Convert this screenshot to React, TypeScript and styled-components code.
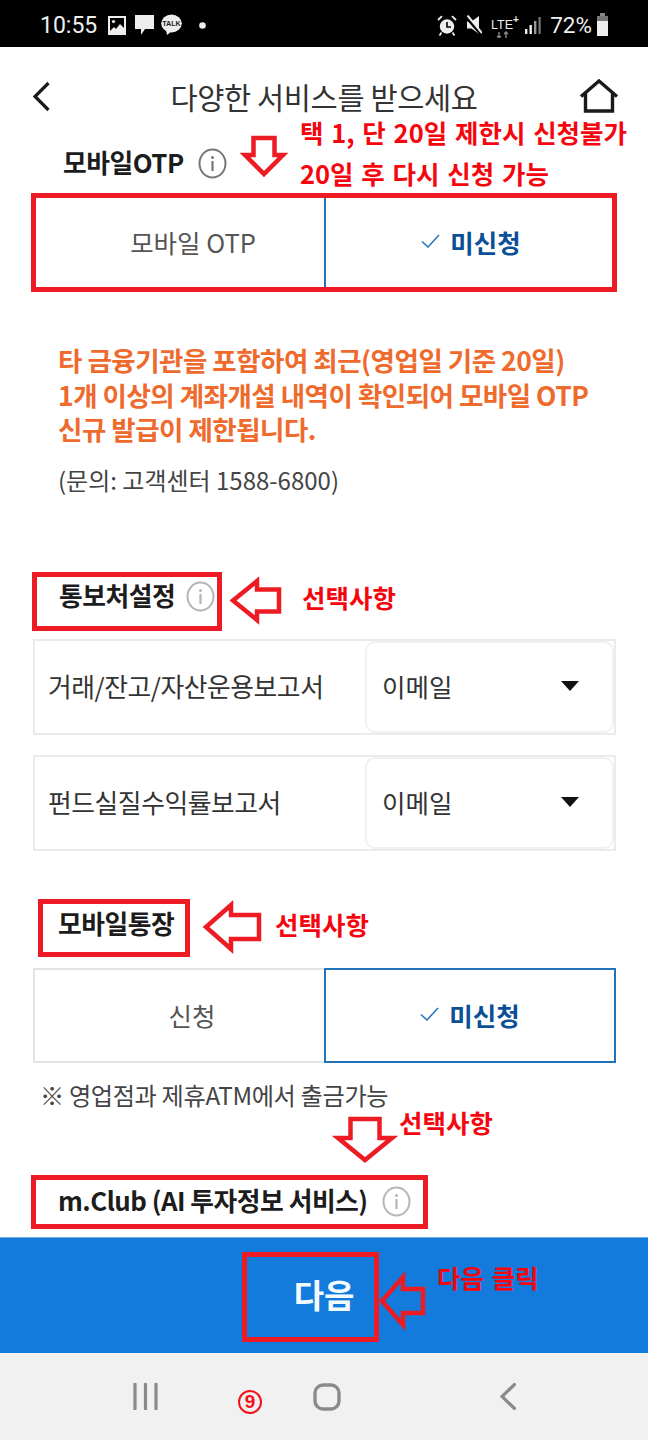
import React from 'react';
import styled, { createGlobalStyle, css } from 'styled-components';

const FONT = `"Noto Sans CJK KR", "Noto Sans", Roboto, sans-serif`;

const Global = createGlobalStyle`
  html, body { margin: 0; padding: 0; background: #fff; }
  body { font-family: ${FONT}; }
  * { box-sizing: border-box; }
`;

const Page = styled.div`
  position: relative;
  width: 648px;
  height: 1440px;
  display: flex;
  flex-direction: column;
  overflow: hidden;
  background: #fff;
`;

const StatusBar = styled.div`
  height: 47px;
  flex: none;
  background: #000;
  color: #eee;
  display: flex;
  align-items: center;
  justify-content: space-between;
  padding: 3px 39px 0 40px;
`;
const StatusGroup = styled.div`
  display: flex;
  align-items: center;
`;
const Time = styled.span`
  font: 400 23px Roboto, sans-serif;
  margin-right: 11px;
`;
const Pct = styled.span`
  font: 400 22.5px Roboto, sans-serif;
  margin: 0 4px 0 9px;
`;
const StatusIcon = styled.svg<{ $after?: number }>`
  flex: none;
  margin-right: ${p => p.$after ?? 0}px;
`;

const Content = styled.main`
  flex: 1;
  min-height: 0;
  overflow: hidden;
  padding: 0 32px 0 33px;
`;

const Header = styled.header`
  height: 98px;
  margin: 0 -33px;
  padding: 0 30px 0 32px;
  display: flex;
  align-items: center;
  justify-content: space-between;
`;
const Title = styled.h1`
  margin: 0 0 0 19px;
  font-size: 29.5px;
  font-weight: 400;
  color: #333;
  letter-spacing: -0.35px;
`;
const LabelRow = styled.div<{ $top: number; $bottom: number; $indent: number; $gap?: number }>`
  height: 36px;
  margin: ${p => p.$top}px 0 ${p => p.$bottom}px;
  padding-left: ${p => p.$indent}px;
  display: flex;
  align-items: center;
  gap: ${p => p.$gap ?? 14}px;
`;
const Label = styled.h2`
  margin: 0 0 4px;
  font-size: 25.8px;
  font-weight: 700;
  color: #1c1c1c;
  letter-spacing: -0.5px;
  white-space: nowrap;
`;
const Toggle = styled.div<{ $h: number }>`
  height: ${p => p.$h}px;
  display: grid;
  grid-template-columns: 291px 292px;
`;
const Cell = styled.div<{ $active?: boolean; $plain?: boolean }>`
  display: flex;
  align-items: center;
  justify-content: center;
  gap: 10px;
  padding: ${p => (p.$active ? '0 0 2px' : `0 0 2px ${p.$plain ? 29 : 25}px`)};
  font-size: 25.5px;
  font-weight: ${p => (p.$active ? 700 : 400)};
  color: ${p => (p.$active ? '#0b4f96' : '#555')};
  ${p => (p.$plain
    ? css`
        padding-bottom: 4px;
        border-left: ${p.$active ? '2px solid #2273b9' : 'none'};
      `
    : css`
        border: ${p.$active ? '2px solid #2273b9' : '2px solid #e3e3e3'};
        ${p.$active ? '' : 'border-right: none;'}
      `)}
`;
const Notice = styled.p`
  margin: 54px 0 0 25px;
  font-size: 26.5px;
  line-height: 34.6px;
  font-weight: 700;
  color: #ef6a2d;
  letter-spacing: -0.5px;
  white-space: nowrap;
`;
const Contact = styled.p`
  margin: 16px 0 0 25px;
  font-size: 24px;
  line-height: 34px;
  color: #444;
  white-space: nowrap;
`;
const ReportRow = styled.div`
  height: 96px;
  display: grid;
  grid-template-columns: 330px 1fr;
  border: 2px solid #ebebeb;
  & + & { margin-top: 20px; }
`;
const ReportName = styled.div`
  padding: 0 0 2px 13px;
  display: flex;
  align-items: center;
  font-size: 25.8px;
  color: #333;
  letter-spacing: -0.45px;
  white-space: nowrap;
`;
const Select = styled.div`
  display: flex;
  align-items: center;
  justify-content: space-between;
  padding: 0 33px 2px 15px;
  border: 2px solid #f1f1f1;
  border-radius: 10px;
  font-size: 25.5px;
  color: #333;
`;
const Caret = styled.span`
  width: 0;
  height: 0;
  border-left: 9px solid transparent;
  border-right: 9px solid transparent;
  border-top: 10px solid #111;
`;
const Note = styled.p`
  margin: 17px 0 0 7px;
  font-size: 24.2px;
  line-height: 30px;
  color: #444;
  letter-spacing: -0.35px;
  white-space: nowrap;
`;

const NextBar = styled.div`
  height: 116px;
  flex: none;
  background: #137bdb;
  border-top: 1px solid #6fb0e8;
  display: flex;
  align-items: center;
  justify-content: center;
  color: #f4fbff;
  font-size: 33px;
  font-weight: 700;
  padding-bottom: 4px;
`;
const NavBar = styled.nav`
  height: 87px;
  flex: none;
  background: #f1f1f1;
  position: relative;
  display: grid;
  grid-template-columns: 133px 25px 155px 28px 159px 16px 1fr;
  padding-top: 30px;
  align-items: start;
`;
const Slot = styled.div<{ $col: number }>`
  grid-column: ${p => p.$col};
  display: flex;
  justify-content: center;
`;
const Circled = styled.span`
  position: absolute;
  left: 238px;
  top: 37px;
  width: 24px;
  height: 24px;
  border: 2px solid #f5101a;
  border-radius: 50%;
  display: flex;
  align-items: center;
  justify-content: center;
  font: 700 19px "Liberation Sans", sans-serif;
  color: #f5101a;
`;

/* Annotations drawn on top of the screenshot */
const Overlay = styled.div`
  position: absolute;
  inset: 0;
  pointer-events: none;
`;
const Highlight = styled.div<{ $x: number; $y: number; $w: number; $h: number }>`
  position: absolute;
  left: ${p => p.$x}px;
  top: ${p => p.$y}px;
  width: ${p => p.$w}px;
  height: ${p => p.$h}px;
  border: 5px solid #ed1c24;
`;
const Mark = styled.span<{ $x: number; $y: number }>`
  position: absolute;
  left: ${p => p.$x}px;
  top: ${p => p.$y}px;
  font-size: 25.5px;
  line-height: 34px;
  font-weight: 700;
  color: #f5060f;
  white-space: nowrap;
  word-spacing: 2px;
  transform: translateY(-17px);
`;
const ArrowSvg = styled.svg<{ $x: number; $y: number }>`
  position: absolute;
  left: ${p => p.$x}px;
  top: ${p => p.$y}px;
  overflow: visible;
`;

const Arrow = ({ x, y, w, h, dir, shaft, head }: { x: number; y: number; w: number; h: number; dir: 'down' | 'left'; shaft: number; head: number }) => {
  const s = dir === 'down' ? w : h;
  const a = (s - shaft) / 2;
  const pts = dir === 'down'
    ? `${a},0 ${a + shaft},0 ${a + shaft},${head} ${w},${head} ${w / 2},${h} 0,${head} ${a},${head}`
    : `${w},${a} ${w},${a + shaft} ${head},${a + shaft} ${head},${h} 0,${h / 2} ${head},0 ${head},${a}`;
  return (
    <ArrowSvg $x={x} $y={y} width={w} height={h} viewBox={`0 0 ${w} ${h}`}>
      <polygon points={pts} fill="none" stroke="#ed1c24" strokeWidth={4.5} strokeLinejoin="miter" />
    </ArrowSvg>
  );
};

const Info = ({ tone = '#777' }: { tone?: string }) => (
  <svg width="29" height="31" viewBox="0 0 29 31" fill="none">
    <ellipse cx="14.5" cy="15.5" rx="13" ry="14" stroke={tone} strokeWidth="2" />
    <circle cx="14.5" cy="9.5" r="1.5" fill={tone} />
    <rect x="13.4" y="13" width="2.2" height="10" fill={tone} />
  </svg>
);

const Check = () => (
  <svg width="19" height="14" viewBox="0 0 19 14" fill="none">
    <path d="M1 7.5 L7 13 L18 1" stroke="#2a78bd" strokeWidth="1.6" />
  </svg>
);

const BackIcon = () => (
  <svg width="18" height="31" viewBox="0 0 18 31" fill="none">
    <path d="M16.5 2 L3 15.5 L16.5 29" stroke="#1a1a1a" strokeWidth="3.2" />
  </svg>
);

const HomeIcon = () => (
  <svg width="40" height="34" viewBox="0 0 40 34" fill="none">
    <path d="M2 17.5 L20 2 L38 17.5 M6.5 14 V32 H33.5 V14" stroke="#1a1a1a" strokeWidth="3.4" />
  </svg>
);

const StatusLeftIcons = () => (
  <>
    <StatusIcon $after={9} width="18" height="19" viewBox="0 0 18 19">
      <path d="M0 0h18v19H0z" fill="#eee" />
      <path d="M2 2h14v10l-4-4-4 5-2-2-4 4z" fill="#000" />
      <circle cx="5.5" cy="5.5" r="1.6" fill="#eee" />
    </StatusIcon>
    <StatusIcon $after={7} width="19" height="22" viewBox="0 0 19 22">
      <path d="M0 1h19v14H10l-4 6v-6H0z" fill="#eee" />
    </StatusIcon>
    <StatusIcon $after={17} width="21" height="22" viewBox="0 0 21 22">
      <ellipse cx="10.5" cy="9.5" rx="10.3" ry="9" fill="#eee" />
      <path d="M5 16l1 5 5-4z" fill="#eee" />
      <text x="10.5" y="12" textAnchor="middle" fontSize="7.2" fontWeight="700" fontFamily="Liberation Sans" fill="#222">TALK</text>
    </StatusIcon>
    <StatusIcon width="7" height="7" viewBox="0 0 7 7">
      <circle cx="3.5" cy="3.5" r="3.3" fill="#eee" />
    </StatusIcon>
  </>
);

const StatusRightIcons = () => (
  <>
    <StatusIcon $after={9} width="20" height="21" viewBox="0 0 20 21" fill="none">
      <circle cx="10" cy="11.5" r="7.2" fill="#eee" />
      <path d="M10 7v5h4" stroke="#000" strokeWidth="1.6" />
      <path d="M1 5L5 1.2M19 5L15 1.2M4.5 17.5l-2 3M15.5 17.5l2 3" stroke="#eee" strokeWidth="1.8" />
    </StatusIcon>
    <StatusIcon $after={9} width="16" height="20" viewBox="0 0 16 20">
      <path d="M1 6.5h4.5L13 1v18L5.5 13.5H1z" fill="#eee" />
      <path d="M0 1.5 L15 19" stroke="#000" strokeWidth="3.4" />
      <path d="M1.5 0.5 L16 18" stroke="#eee" strokeWidth="2" />
    </StatusIcon>
    <StatusIcon $after={3} width="30" height="26" viewBox="0 0 30 26">
      <text x="0" y="17" fontSize="12.5" fontFamily="Liberation Sans" fill="#eee">
        LTE<tspan dy="-6" fontSize="10" fontWeight="700">+</tspan>
      </text>
      <path d="M8 20v6M6 24l2 2 2-2M15 26v-6M13 22l2-2 2 2" stroke="#888" strokeWidth="1.4" fill="none" />
    </StatusIcon>
    <StatusIcon width="17" height="18" viewBox="0 0 17 18">
      <path d="M1 13h2.4v5H1z" fill="#eee" />
      <path d="M5.5 9h2.4v9H5.5z" fill="#eee" />
      <path d="M10 5h2.4v13H10z" fill="#999" />
      <path d="M14.5 1h2.2v17h-2.2z" fill="#777" />
    </StatusIcon>
    <Pct>72%</Pct>
    <StatusIcon width="13" height="24" viewBox="0 0 13 24">
      <path d="M4 0h5v3H4z" fill="#888" />
      <path d="M1 3h11v5H1z" fill="#777" />
      <path d="M1 8h11v15H1z" fill="#eee" />
    </StatusIcon>
  </>
);

export default function App() {
  return (
    <Page>
      <Global />
      <StatusBar>
        <StatusGroup>
          <Time>10:55</Time>
          <StatusLeftIcons />
        </StatusGroup>
        <StatusGroup>
          <StatusRightIcons />
        </StatusGroup>
      </StatusBar>

      <Content>
        <Header>
          <BackIcon />
          <Title>다양한 서비스를 받으세요</Title>
          <HomeIcon />
        </Header>

        <LabelRow $top={0} $bottom={16} $indent={30}>
          <Label>모바일OTP</Label>
          <Info />
        </LabelRow>
        <Toggle $h={92}>
          <Cell $plain>모바일 OTP</Cell>
          <Cell $plain $active><Check />미신청</Cell>
        </Toggle>

        <Notice>
          타 금융기관을 포함하여 최근(영업일 기준 20일)<br />
          1개 이상의 계좌개설 내역이 확인되어 모바일 OTP<br />
          신규 발급이 제한됩니다.
        </Notice>
        <Contact>(문의: 고객센터 1588-6800)</Contact>

        <LabelRow $top={82} $bottom={24} $indent={26} $gap={11}>
          <Label>통보처설정</Label>
          <Info tone="#b5b5b5" />
        </LabelRow>
        <ReportRow>
          <ReportName>거래/잔고/자산운용보고서</ReportName>
          <Select>이메일<Caret /></Select>
        </ReportRow>
        <ReportRow>
          <ReportName>펀드실질수익률보고서</ReportName>
          <Select>이메일<Caret /></Select>
        </ReportRow>

        <LabelRow $top={56} $bottom={25} $indent={25}>
          <Label>모바일통장</Label>
        </LabelRow>
        <Toggle $h={95}>
          <Cell>신청</Cell>
          <Cell $active><Check />미신청</Cell>
        </Toggle>
        <Note>※ 영업점과 제휴ATM에서 출금가능</Note>

        <LabelRow $top={74} $bottom={0} $indent={25}>
          <Label>m.Club (AI 투자정보 서비스)</Label>
          <Info tone="#b5b5b5" />
        </LabelRow>
      </Content>

      <NextBar>다음</NextBar>

      <NavBar>
        <Slot $col={2}>
          <svg width="25" height="27" viewBox="0 0 25 27"><path d="M2 1v25M12.5 1v25M23 1v25" stroke="#8a8a8a" strokeWidth="3.2" strokeLinecap="round" /></svg>
        </Slot>
        <Slot $col={4}>
          <svg width="28" height="28" viewBox="0 0 28 28" fill="none"><rect x="2" y="2" width="24" height="24" rx="8" stroke="#8a8a8a" strokeWidth="3.4" /></svg>
        </Slot>
        <Slot $col={6}>
          <svg width="16" height="27" viewBox="0 0 16 27" fill="none"><path d="M14.5 1.5 L2 13.5 L14.5 25.5" stroke="#8a8a8a" strokeWidth="3.2" strokeLinecap="round" /></svg>
        </Slot>
        <Circled>9</Circled>
      </NavBar>

      <Overlay>
        <Highlight $x={31} $y={193} $w={586} $h={99} />
        <Highlight $x={32} $y={572} $w={190} $h={59} />
        <Highlight $x={38} $y={899} $w={152} $h={58} />
        <Highlight $x={31} $y={1175} $w={397} $h={54} />
        <Highlight $x={242} $y={1252} $w={137} $h={90} />

        <Arrow x={245} y={138} w={38} h={36} dir="down" shaft={21} head={17} />
        <Arrow x={233} y={581} w={46} h={39} dir="left" shaft={22} head={24} />
        <Arrow x={206} y={905} w={53} h={44} dir="left" shaft={24} head={25} />
        <Arrow x={338} y={1119} w={54} h={41} dir="down" shaft={29} head={19} />
        <Arrow x={382} y={1277} w={41} h={48} dir="left" shaft={24} head={21} />

        <Mark $x={300} $y={132}>택 1, 단 20일 제한시 신청불가</Mark>
        <Mark $x={300} $y={173}>20일 후 다시 신청 가능</Mark>
        <Mark $x={302} $y={597}>선택사항</Mark>
        <Mark $x={275} $y={924}>선택사항</Mark>
        <Mark $x={399} $y={1122}>선택사항</Mark>
        <Mark $x={437} $y={1277}>다음 클릭</Mark>
      </Overlay>
    </Page>
  );
}
